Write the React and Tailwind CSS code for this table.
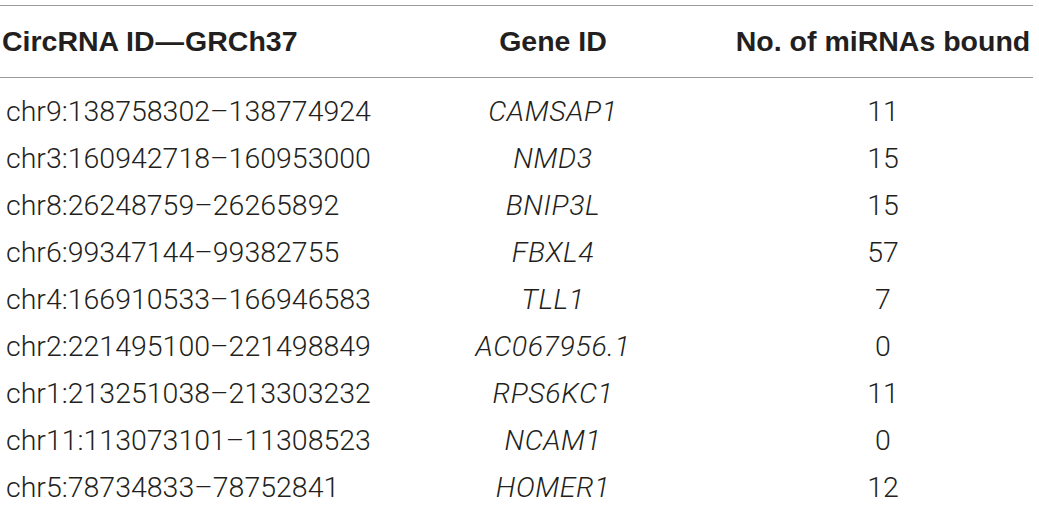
import React from "react";

const rows = [
  ["chr9:138758302–138774924", "CAMSAP1", "11"],
  ["chr3:160942718–160953000", "NMD3", "15"],
  ["chr8:26248759–26265892", "BNIP3L", "15"],
  ["chr6:99347144–99382755", "FBXL4", "57"],
  ["chr4:166910533–166946583", "TLL1", "7"],
  ["chr2:221495100–221498849", "AC067956.1", "0"],
  ["chr1:213251038–213303232", "RPS6KC1", "11"],
  ["chr11:113073101–11308523", "NCAM1", "0"],
  ["chr5:78734833–78752841", "HOMER1", "12"],
];

export default function App() {
  return (
    <div className="w-[1039px] h-[507px] overflow-hidden bg-white pt-[5px] text-[#231f20]">
      <div className="w-[1033px]">
        <div
          className="grid grid-cols-[433px_240px_360px] h-[73px] items-center border-t border-b border-[#9c9c9c] font-bold text-[28.5px] leading-none"
          style={{ fontFamily: '"Liberation Sans", Arial, sans-serif' }}
        >
          <div className="pl-[2px] whitespace-nowrap">
            CircRNA ID<span className="px-[1px]">—</span>GRCh37
          </div>
          <div className="text-center">Gene ID</div>
          <div className="pl-[60px] text-center whitespace-nowrap">No. of miRNAs bound</div>
        </div>
        <div
          className="pt-[11px] font-light text-[28.5px] leading-none"
          style={{ fontFamily: 'Roboto, "Liberation Sans", sans-serif' }}
        >
          {rows.map(([id, gene, n]) => (
            <div key={id} className="grid grid-cols-[433px_240px_360px] h-[47px] items-center">
              <div className="pl-[6px] whitespace-nowrap">{id}</div>
              <div className="text-center italic tracking-[0.6px]">{gene}</div>
              <div className="pl-[60px] text-center">{n}</div>
            </div>
          ))}
        </div>
      </div>
    </div>
  );
}
